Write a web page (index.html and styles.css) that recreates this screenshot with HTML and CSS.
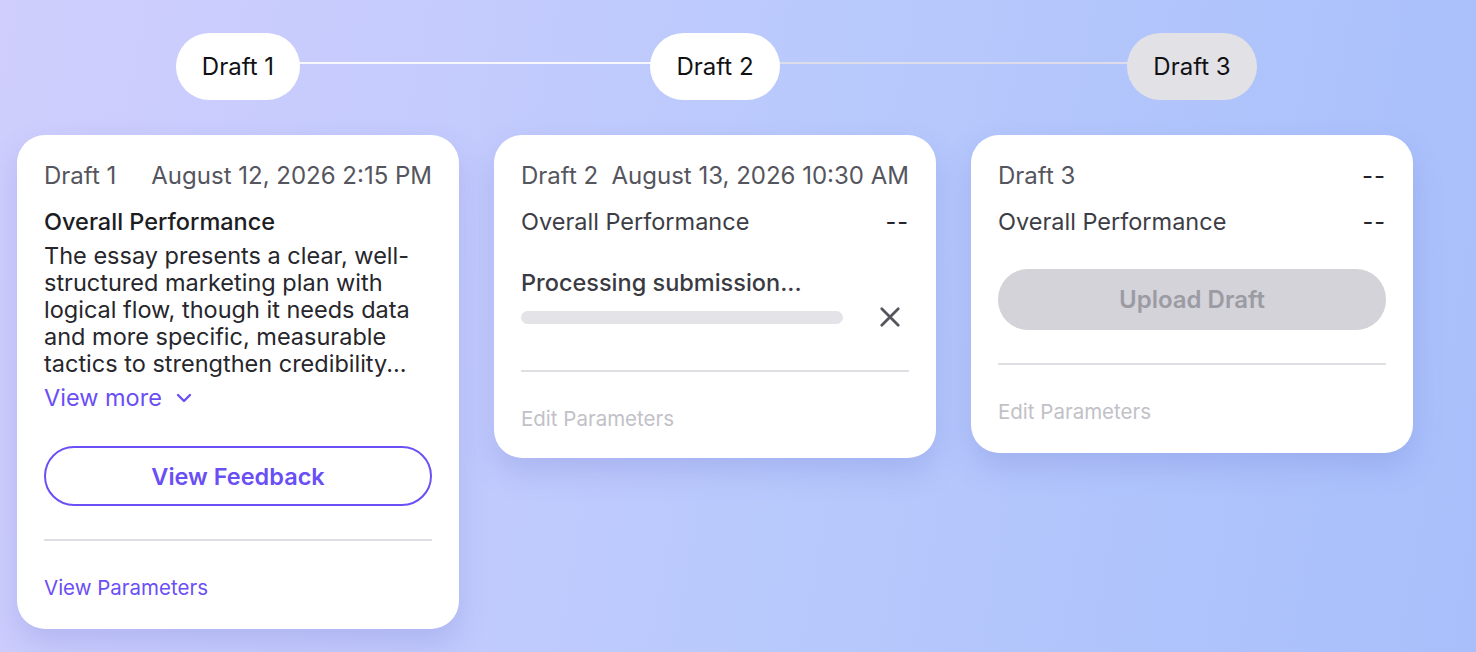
FILE: index.html
```html
<!DOCTYPE html>
<html lang="en">
<head>
    <meta charset="UTF-8">
    <meta name="viewport" content="width=device-width, initial-scale=1.0">
    <title>Draft History</title>
    <link rel="stylesheet" href="styles.css">
</head>
<body>
    <div class="board">
        <div class="steps">
            <div class="step step-done"><span class="pill">Draft 1</span></div>
            <div class="step step-current"><span class="pill">Draft 2</span></div>
            <div class="step step-pending"><span class="pill pill-muted">Draft 3</span></div>
        </div>

        <div class="cards">
            <!-- finished draft -->
            <div class="card">
                <div class="row card-head">
                    <span>Draft 1</span>
                    <span>August 12, 2026 2:15 PM</span>
                </div>
                <div class="perf-title">Overall Performance</div>
                <p class="summary">The essay presents a clear, well-structured marketing plan with logical flow, though it needs data and more specific, measurable tactics to strengthen credibility...</p>
                <a class="view-more" href="#">View more
                    <svg width="16" height="10" viewBox="0 0 16 10"><path d="M2 2l6 6 6-6" fill="none" stroke="currentColor" stroke-width="2.4" stroke-linecap="round" stroke-linejoin="round"/></svg>
                </a>
                <button class="btn btn-outline">View Feedback</button>
                <hr class="divider">
                <a class="foot-link" href="#">View Parameters</a>
            </div>

            <!-- draft being processed -->
            <div class="card card-processing">
                <div class="row card-head">
                    <span>Draft 2</span>
                    <span>August 13, 2026 10:30 AM</span>
                </div>
                <div class="row perf-row">
                    <span>Overall Performance</span>
                    <span class="dash">--</span>
                </div>
                <div class="processing">Processing submission...</div>
                <div class="progress-row">
                    <div class="progress"></div>
                    <svg class="cancel" width="24" height="24" viewBox="0 0 24 24"><path d="M3 3l18 18M21 3L3 21" stroke="currentColor" stroke-width="3" stroke-linecap="round"/></svg>
                </div>
                <hr class="divider divider-wide">
                <a class="foot-link foot-link-off" href="#">Edit Parameters</a>
            </div>

            <!-- empty slot -->
            <div class="card">
                <div class="row card-head">
                    <span>Draft 3</span>
                    <span class="dash">--</span>
                </div>
                <div class="row perf-row">
                    <span>Overall Performance</span>
                    <span class="dash">--</span>
                </div>
                <button class="btn btn-disabled" disabled>Upload Draft</button>
                <hr class="divider">
                <a class="foot-link foot-link-off" href="#">Edit Parameters</a>
            </div>
        </div>
    </div>
</body>
</html>
```

FILE: styles.css
```css
body {
    margin: 0;
    min-height: 652px;
    font-family: Inter, 'Noto Sans', sans-serif;
    background: linear-gradient(100deg, #cfcefd 0%, #c4cbfd 30%, #b8c9fc 55%, #a8bffb 100%);
    color: #222228;
    overflow: hidden;
}
.board {
    padding: 33px 0 0 17px;
}

/* timeline of drafts */
.steps {
    display: grid;
    grid-template-columns: repeat(3, 442px);
    column-gap: 35px;
}
.step {
    position: relative;
    display: flex;
    justify-content: center;
}
.step::after {
    content: "";
    position: absolute;
    top: 29px;
    left: 50%;
    width: calc(100% + 35px);
    height: 2px;
    z-index: 0;
}
.step-done::after { background: rgba(255, 255, 255, 0.85); }
.step-current::after { background: #dcdcea; }
.step-pending::after { display: none; }
.pill {
    position: relative;
    z-index: 1;
    height: 67px;
    padding: 0 26px;
    display: flex;
    align-items: center;
    border-radius: 34px;
    background: #fff;
    color: #111114;
    font-size: 24px;
}
.pill-muted { background: #e1e1e6; }

/* cards */
.cards {
    display: grid;
    grid-template-columns: repeat(3, 442px);
    column-gap: 35px;
    align-items: start;
    margin-top: 35px;
}
.card {
    background: #fff;
    border-radius: 28px;
    padding: 27px 27px 29px;
    box-shadow: 0 14px 30px rgba(95, 105, 200, 0.22);
}
.card-processing { padding-bottom: 27px; }
.row {
    display: flex;
    justify-content: space-between;
    align-items: center;
}
.card-head {
    font-size: 24px;
    line-height: 28px;
    color: #55555e;
}
.perf-title {
    margin-top: 18px;
    font-size: 23.5px;
    line-height: 28px;
    font-weight: 500;
    color: #1c1c22;
}
.perf-row {
    margin-top: 18px;
    font-size: 23.5px;
    line-height: 28px;
    color: #3d3d46;
}
.dash { color: #222228; letter-spacing: 1px; }
.summary {
    margin: 6px 0 0;
    font-size: 23.5px;
    line-height: 27px;
    color: #26262c;
}
.view-more {
    display: inline-flex;
    align-items: center;
    gap: 14px;
    margin-top: 7px;
    font-size: 23.5px;
    line-height: 28px;
    color: #6a4ff5;
    text-decoration: none;
}
.btn {
    display: block;
    width: 100%;
    height: 60px;
    border-radius: 30px;
    font-family: inherit;
    font-size: 23.5px;
    font-weight: 600;
}
.btn-outline {
    margin-top: 34px;
    background: #fff;
    border: 2px solid #6b50f6;
    color: #6a4ff5;
}
.btn-disabled {
    margin-top: 33px;
    height: 61px;
    border: none;
    background: #d3d3d9;
    color: #9b9ba4;
    font-size: 24px;
}
.divider {
    margin: 33px 0 0;
    border: none;
    border-top: 2px solid #dedee3;
}
.divider-wide { margin-top: 43px; }
.foot-link {
    display: block;
    margin-top: 35px;
    font-size: 20.5px;
    line-height: 24px;
    color: #6a4ff5;
    text-decoration: none;
}
.foot-link-off { color: #c1c1c8; }

/* processing state */
.processing {
    margin-top: 33px;
    font-size: 23.5px;
    line-height: 28px;
    font-weight: 500;
    color: #3a3a42;
}
.progress-row {
    display: flex;
    align-items: center;
    justify-content: space-between;
    margin-top: 10px;
    height: 20px;
    padding-right: 8px;
}
.progress {
    width: 322px;
    height: 13px;
    border-radius: 7px;
    background: #e3e3e8;
}
.cancel {
    width: 22px;
    height: 22px;
    color: #55555e;
}
```
